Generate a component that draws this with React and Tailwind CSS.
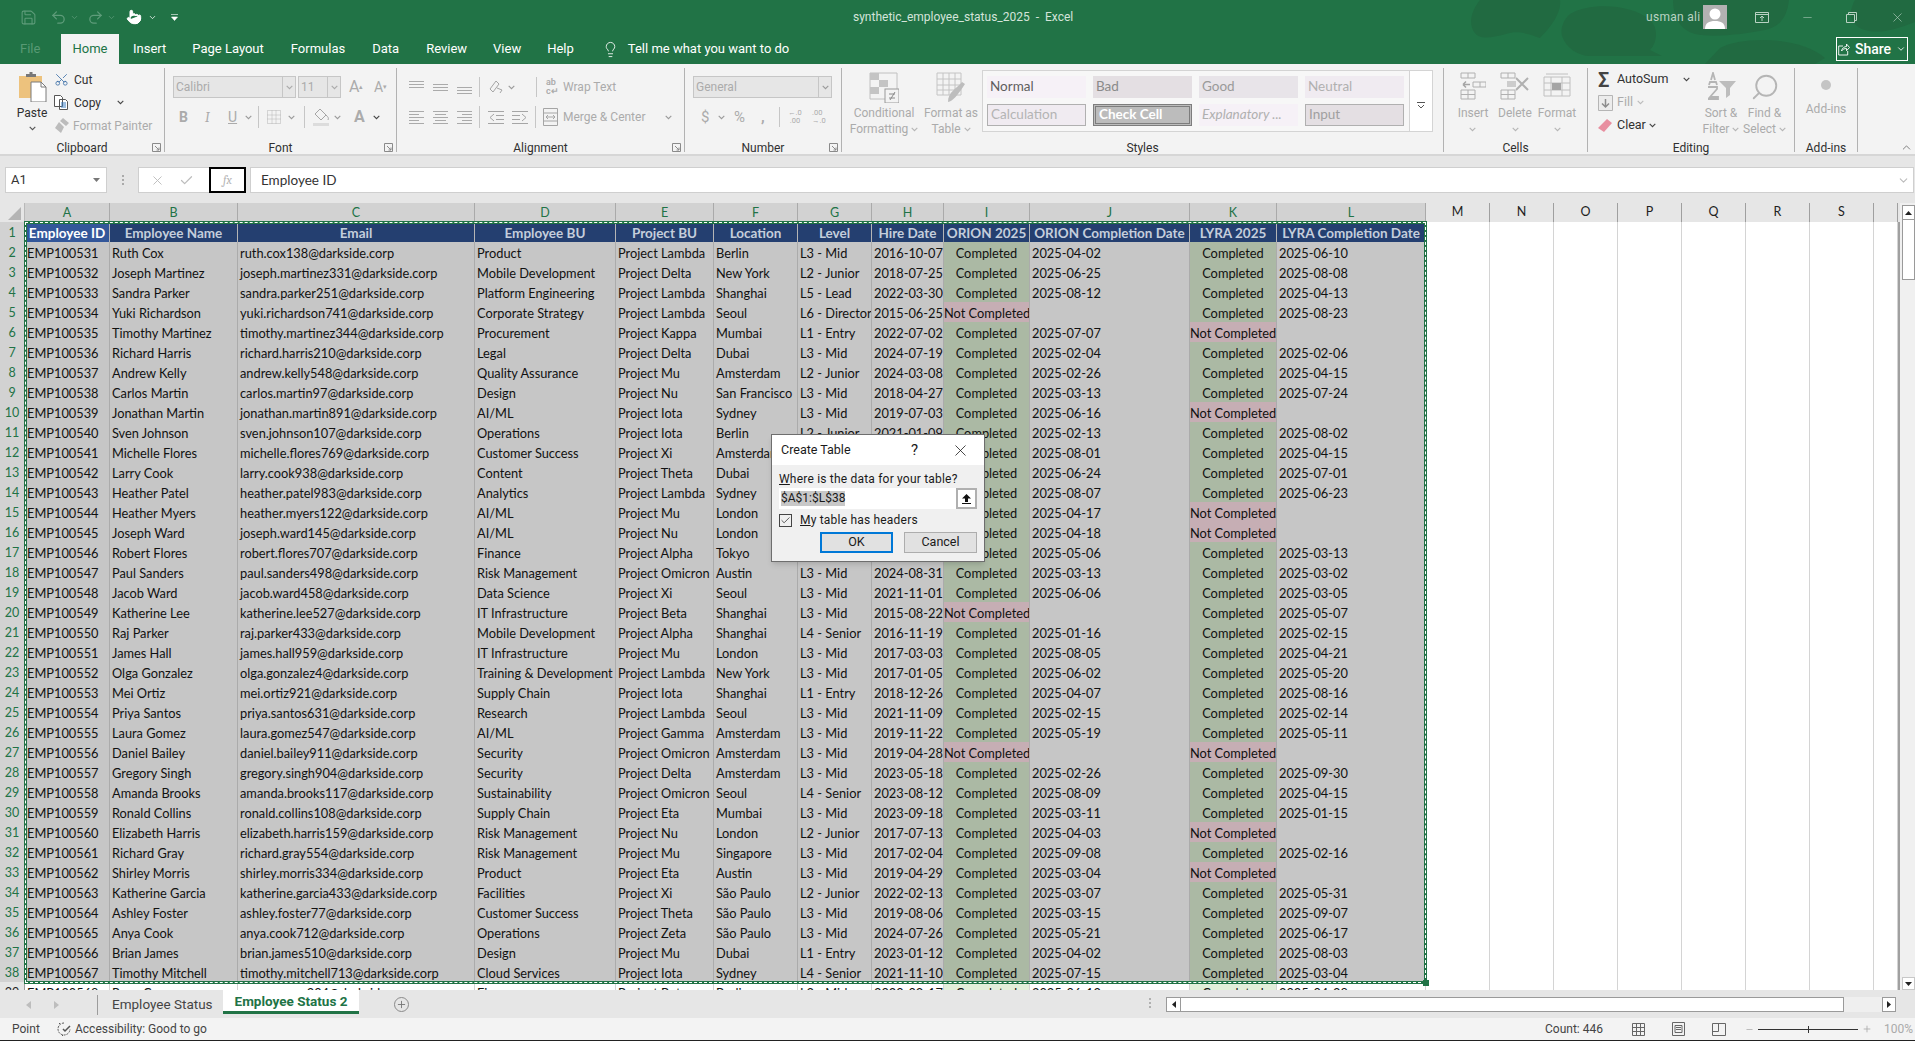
import React from 'react';
import { Save, Undo2, Redo2, Pointer, Lightbulb, ChevronDown, ChevronUp, Scissors, X, Check, Plus, Minus, Search } from 'lucide-react';

const C = 'Completed';
const N = 'Not Completed';
const raw = `100531|Ruth Cox|ruth.cox138|Product|Lambda|Berlin|L3 - Mid|2016-10-07|C|2025-04-02|C|2025-06-10
100532|Joseph Martinez|joseph.martinez331|Mobile Development|Delta|New York|L2 - Junior|2018-07-25|C|2025-06-25|C|2025-08-08
100533|Sandra Parker|sandra.parker251|Platform Engineering|Lambda|Shanghai|L5 - Lead|2022-03-30|C|2025-08-12|C|2025-04-13
100534|Yuki Richardson|yuki.richardson741|Corporate Strategy|Lambda|Seoul|L6 - Director|2015-06-25|N||C|2025-08-23
100535|Timothy Martinez|timothy.martinez344|Procurement|Kappa|Mumbai|L1 - Entry|2022-07-02|C|2025-07-07|N|
100536|Richard Harris|richard.harris210|Legal|Delta|Dubai|L3 - Mid|2024-07-19|C|2025-02-04|C|2025-02-06
100537|Andrew Kelly|andrew.kelly548|Quality Assurance|Mu|Amsterdam|L2 - Junior|2024-03-08|C|2025-02-26|C|2025-04-15
100538|Carlos Martin|carlos.martin97|Design|Nu|San Francisco|L3 - Mid|2018-04-27|C|2025-03-13|C|2025-07-24
100539|Jonathan Martin|jonathan.martin891|AI/ML|Iota|Sydney|L3 - Mid|2019-07-03|C|2025-06-16|N|
100540|Sven Johnson|sven.johnson107|Operations|Iota|Berlin|L2 - Junior|2021-01-09|C|2025-02-13|C|2025-08-02
100541|Michelle Flores|michelle.flores769|Customer Success|Xi|Amsterdam|L3 - Mid|2020-05-11|C|2025-08-01|C|2025-04-15
100542|Larry Cook|larry.cook938|Content|Theta|Dubai|L3 - Mid|2020-02-18|C|2025-06-24|C|2025-07-01
100543|Heather Patel|heather.patel983|Analytics|Lambda|Sydney|L3 - Mid|2019-10-03|C|2025-08-07|C|2025-06-23
100544|Heather Myers|heather.myers122|AI/ML|Mu|London|L3 - Mid|2021-06-14|C|2025-04-17|N|
100545|Joseph Ward|joseph.ward145|AI/ML|Nu|London|L3 - Mid|2018-09-21|C|2025-04-18|N|
100546|Robert Flores|robert.flores707|Finance|Alpha|Tokyo|L3 - Mid|2022-01-27|C|2025-05-06|C|2025-03-13
100547|Paul Sanders|paul.sanders498|Risk Management|Omicron|Austin|L3 - Mid|2024-08-31|C|2025-03-13|C|2025-03-02
100548|Jacob Ward|jacob.ward458|Data Science|Xi|Seoul|L3 - Mid|2021-11-01|C|2025-06-06|C|2025-03-05
100549|Katherine Lee|katherine.lee527|IT Infrastructure|Beta|Shanghai|L3 - Mid|2015-08-22|N||C|2025-05-07
100550|Raj Parker|raj.parker433|Mobile Development|Alpha|Shanghai|L4 - Senior|2016-11-19|C|2025-01-16|C|2025-02-15
100551|James Hall|james.hall959|IT Infrastructure|Mu|London|L3 - Mid|2017-03-03|C|2025-08-05|C|2025-04-21
100552|Olga Gonzalez|olga.gonzalez4|Training & Development|Lambda|New York|L3 - Mid|2017-01-05|C|2025-06-02|C|2025-05-20
100553|Mei Ortiz|mei.ortiz921|Supply Chain|Iota|Shanghai|L1 - Entry|2018-12-26|C|2025-04-07|C|2025-08-16
100554|Priya Santos|priya.santos631|Research|Lambda|Seoul|L3 - Mid|2021-11-09|C|2025-02-15|C|2025-02-14
100555|Laura Gomez|laura.gomez547|AI/ML|Gamma|Amsterdam|L3 - Mid|2019-11-22|C|2025-05-19|C|2025-05-11
100556|Daniel Bailey|daniel.bailey911|Security|Omicron|Amsterdam|L3 - Mid|2019-04-28|N||N|
100557|Gregory Singh|gregory.singh904|Security|Delta|Amsterdam|L3 - Mid|2023-05-18|C|2025-02-26|C|2025-09-30
100558|Amanda Brooks|amanda.brooks117|Sustainability|Omicron|Seoul|L4 - Senior|2023-08-12|C|2025-08-09|C|2025-04-15
100559|Ronald Collins|ronald.collins108|Supply Chain|Eta|Mumbai|L3 - Mid|2023-09-18|C|2025-03-11|C|2025-01-15
100560|Elizabeth Harris|elizabeth.harris159|Risk Management|Nu|London|L2 - Junior|2017-07-13|C|2025-04-03|N|
100561|Richard Gray|richard.gray554|Risk Management|Mu|Singapore|L3 - Mid|2017-02-04|C|2025-09-08|C|2025-02-16
100562|Shirley Morris|shirley.morris334|Product|Eta|Austin|L3 - Mid|2019-04-29|C|2025-03-04|N|
100563|Katherine Garcia|katherine.garcia433|Facilities|Xi|São Paulo|L2 - Junior|2022-02-13|C|2025-03-07|C|2025-05-31
100564|Ashley Foster|ashley.foster77|Customer Success|Theta|São Paulo|L3 - Mid|2019-08-06|C|2025-03-15|C|2025-09-07
100565|Anya Cook|anya.cook712|Operations|Zeta|São Paulo|L3 - Mid|2024-07-26|C|2025-05-21|C|2025-06-17
100566|Brian James|brian.james510|Design|Mu|Dubai|L1 - Entry|2023-01-12|C|2025-04-02|C|2025-08-03
100567|Timothy Mitchell|timothy.mitchell713|Cloud Services|Iota|Sydney|L4 - Senior|2021-11-10|C|2025-07-15|C|2025-03-04`;

const rows = raw.split('\n').map((l) => l.split('|'));
const headers = ['Employee ID', 'Employee Name', 'Email', 'Employee BU', 'Project BU', 'Location', 'Level', 'Hire Date', 'ORION 2025', 'ORION Completion Date', 'LYRA 2025', 'LYRA Completion Date'];
const selCols = ['A', 'B', 'C', 'D', 'E', 'F', 'G', 'H', 'I', 'J', 'K', 'L'];
const otherCols = ['M', 'N', 'O', 'P', 'Q', 'R', 'S', ''];
const gridCols = 'grid grid-cols-[25px_85px_128px_237px_141px_98px_84px_74px_72px_86px_160px_87px_149px_64px_64px_64px_64px_64px_64px_64px_24px]';

const Chev = ({ className = 'text-[#9a9a9a]' }) => (
  <svg width="7" height="5" viewBox="0 0 7 5" className={`shrink-0 ${className}`}><path d="M.7.8l2.8 2.8L6.3.8" fill="none" stroke="currentColor" strokeWidth="1.1" /></svg>
);

const Lines = ({ widths, color = '#aaa' }) => (
  <svg width="15" height="13" viewBox="0 0 15 13" className="shrink-0">
    {widths.map(([x, w, y], i) => <rect key={i} x={x} y={y} width={w} height="1" fill={color} />)}
  </svg>
);

const Launcher = () => (
  <svg width="9" height="9" viewBox="0 0 9 9" className="text-[#8a8a8a]"><path d="M.5 8.5V.5h8v8z M3 3l4 4M7 4.5V7H4.5" fill="none" stroke="currentColor" strokeWidth="1" /></svg>
);

const Group = ({ w, label, launcher, children }) => (
  <div className={`flex flex-col h-[84px] border-r border-[#b2b2b2] shrink-0 ${w}`}>
    <div className="flex-1 min-h-0">{children}</div>
    <div className="relative h-[8px] flex items-center justify-center text-[12px] leading-none text-[#303030]">
      {label}
      {launcher && <span className="absolute right-[3px] -top-[1px] flex"><Launcher /></span>}
    </div>
  </div>
);

const BigButton = ({ w, icon, lines, ml = '' }) => (
  <div className={`flex flex-col items-center shrink-0 ${w} ${ml}`}>
    <div className="h-[37px] pt-[4px] flex items-start justify-center">{icon}</div>
    <div className="text-[12px] leading-[16px] text-[#ababab] text-center whitespace-nowrap flex flex-col items-center">
      {lines.map((l, i) => (
        <span key={i} className="flex items-center gap-[3px]">{l}{i === lines.length - 1 && lines.length === 2 && <Chev className="text-[#b5b5b5]" />}</span>
      ))}
      {lines.length === 1 && <span className="h-[16px] flex items-center"><Chev className="text-[#b5b5b5]" /></span>}
    </div>
  </div>
);

const StyleCell = ({ className, children }) => (
  <div className={`h-[22px] w-[99px] flex items-center px-[3px] text-[13.5px] leading-none whitespace-nowrap shrink-0 font-[Lato,sans-serif] ${className}`}>{children}</div>
);

const Blobs = () => (
  <svg className="absolute right-0 top-0 pointer-events-none" width="480" height="64" viewBox="0 0 480 64">
    <g fill="#216a41">
      <path d="M45 0c-8 10-12 22-6 32 5 7 14 7 32 2 10-3 18-2 34 4 8-8 22-24 20-38z" />
      <path d="M135 14c20-12 62-10 80 6 8 7 8 22 0 30l12 6H155c-12 0-24-8-28-20-2-8 2-17 8-22z" />
      <path d="M238 0c0 14 6 30 22 34 18 4 50 0 70-4 14-3 22-12 24-30z" />
      <path d="M285 48c22-12 80-12 105 10l-10 6H270z" />
      <path d="M420 0c-8 14-4 26 10 30 14 4 30 0 50-8V0z" />
    </g>
  </svg>
);

const TitleBar = () => (
  <div className="relative z-10 h-[34px] flex items-center text-[#d4e4da]">
    <div className="flex items-center h-full pl-[20px] w-[853px] shrink-0">
      <Save size={17} strokeWidth={1.5} className="text-[#5e9c7a]" />
      <Undo2 size={17} strokeWidth={1.8} className="ml-[13px] text-[#5e9c7a]" />
      <ChevronDown size={9} className="ml-[3px] text-[#5e9c7a]" />
      <Redo2 size={17} strokeWidth={1.8} className="ml-[8px] text-[#5e9c7a]" />
      <ChevronDown size={9} className="ml-[3px] text-[#5e9c7a]" />
      <Pointer size={16} strokeWidth={1.5} fill="#fff" className="ml-[10px] text-white" />
      <ChevronDown size={9} className="ml-[6px] text-white" />
      <svg width="7" height="8" viewBox="0 0 7 8" className="ml-[14px] text-white"><path d="M0 1.5h7M.5 4h6L3.5 7.5z" fill="currentColor" stroke="currentColor" strokeWidth=".6" /></svg>
    </div>
    <div className="text-[12px] whitespace-nowrap">synthetic_employee_status_2025&nbsp;&nbsp;-&nbsp;&nbsp;Excel</div>
    <div className="ml-auto flex items-center h-full text-[#b9d2c3]">
      <span className="text-[12px] tracking-[0.3px] w-[57px] whitespace-nowrap">usman ali</span>
      <span className="w-[24px] h-[24px] bg-[#b1b1b1] overflow-hidden flex items-end justify-center">
        <svg width="22" height="23" viewBox="0 0 22 23"><circle cx="11" cy="8" r="5.5" fill="#fff" /><path d="M1 23c0-6 4-8 10-8s10 2 10 8z" fill="#fff" /></svg>
      </span>
      <svg width="14" height="11" viewBox="0 0 14 11" className="ml-[28px]"><path d="M.5.5h13v10H.5zM.5 2.5h13M7 9V4M5 6l2-2 2 2" fill="none" stroke="currentColor" /></svg>
      <Minus size={13} strokeWidth={1} className="ml-[32px]" />
      <svg width="11" height="11" viewBox="0 0 11 11" className="ml-[32px]"><path d="M.5 2.5h8v8h-8zM2.5 2.5v-2h8v8h-2" fill="none" stroke="currentColor" /></svg>
      <X size={15} strokeWidth={1} className="ml-[33px] mr-[10px]" />
    </div>
  </div>
);

const TabRow = () => {
  const tabs = [['Insert', 'ml-[14px]'], ['Page Layout', 'ml-[26px]'], ['Formulas', 'ml-[27px]'], ['Data', 'ml-[27px]'], ['Review', 'ml-[27px]'], ['View', 'ml-[26px]'], ['Help', 'ml-[26px]']];
  return (
    <div className="relative z-10 h-[30px] flex items-stretch text-[13px] text-white">
      <span className="ml-[20px] w-[41px] flex items-center text-[#589a74]">File</span>
      <span className="w-[58px] bg-[#f3f3f3] text-[#217346] flex items-center justify-center">Home</span>
      {tabs.map(([t, m]) => <span key={t} className={`flex items-center whitespace-nowrap ${m}`}>{t}</span>)}
      <span className="flex items-center ml-[28px]"><Lightbulb size={17} strokeWidth={1.2} /></span>
      <span className="flex items-center ml-[9px] whitespace-nowrap">Tell me what you want to do</span>
      <span className="ml-auto mr-[7px] mt-[3px] mb-[3px] w-[72px] border-[1.5px] border-white flex items-center justify-center gap-[5px] text-[14px] font-medium">
        <svg width="12" height="13" viewBox="0 0 12 13"><path d="M5 3H.7v9h9V8M3.5 8c.5-3 3-4.5 5-4.5V1l3 3.5-3 3.2V5.5C6.5 5.5 5 6 3.5 8z" fill="none" stroke="#fff" strokeWidth=".9" /></svg>
        Share
        <ChevronDown size={10} />
      </span>
    </div>
  );
};

const Ribbon = () => (
  <div className="h-[92px] bg-[#f3f3f3] border-b-2 border-[#d6d6d6] pt-[4px] flex text-[#ababab]">
    <Group w="w-[165px]" label="Clipboard" launcher>
      <div className="flex">
        <div className="w-[50px] pl-[14px] flex flex-col items-center shrink-0">
          <svg width="30" height="30" viewBox="0 0 30 30" className="mt-[4px]">
            <path d="M2 4h23v22H2z" fill="#edc27d" /><path d="M9 5V2h3.5V0h3v2H19v3z" fill="#787878" />
            <path d="M14 10h10l5 5v15H14z" fill="#fff" stroke="#7a7a7a" /><path d="M24 10v5h5" fill="none" stroke="#7a7a7a" />
          </svg>
          <span className="text-[12px] leading-none mt-[5px] text-[#303030]">Paste</span>
          <span className="mt-[7px]"><Chev className="text-[#555]" /></span>
        </div>
        <div className="ml-[4px] flex flex-col">
          <div className="h-[23px] flex items-center gap-[5px] text-[12px] text-[#303030]"><Scissors size={15} strokeWidth={1.3} className="text-[#3a6ea8] -rotate-90" />Cut</div>
          <div className="h-[23px] flex items-center gap-[5px] text-[12px] text-[#303030]">
            <svg width="15" height="15" viewBox="0 0 15 15" fill="none" stroke="#555"><path d="M.5.5h6l2 2v9h-8zM5.5 4.5h6l2 2v8h-8z" fill="#fff" /><path d="M7 8h5M7 10h5M7 12h5" stroke="#3a7fc4" /></svg>
            Copy<span className="ml-[11px]"><Chev className="text-[#444]" /></span>
          </div>
          <div className="h-[23px] flex items-center gap-[4px] text-[12px] whitespace-nowrap">
            <svg width="15" height="15" viewBox="0 0 15 15" fill="#bcbcbc"><path d="M9 0l6 5-3 3-6-5zM5 4l5 5-3 6-6-5z" /></svg>
            Format Painter
          </div>
        </div>
      </div>
    </Group>

    <Group w="w-[232px]" label="Font" launcher>
      <div className="pt-[8px] pl-[8px]">
        <div className="flex items-center h-[22px]">
          <div className="w-[123px] h-[22px] bg-[#e6e6e6] border border-[#c6c6c6] flex items-center justify-between text-[12px] pl-[2px]">Calibri<span className="w-[13px] h-full border-l border-[#c6c6c6] flex items-center justify-center"><Chev className="text-[#aaa]" /></span></div>
          <div className="ml-[2px] w-[43px] h-[22px] bg-[#e6e6e6] border border-[#c6c6c6] flex items-center justify-between text-[12px] pl-[2px]">11<span className="w-[13px] h-full border-l border-[#c6c6c6] flex items-center justify-center"><Chev className="text-[#aaa]" /></span></div>
          <span className="ml-[8px] w-[25px] text-[16px] leading-none">A<sup className="text-[7px]">▴</sup></span>
          <span className="text-[14px] leading-none">A<sup className="text-[7px]">▾</sup></span>
        </div>
        <div className="flex items-center h-[22px] mt-[8px] text-[14px]">
          <span className="ml-[6px] w-[26px] font-bold">B</span>
          <span className="w-[23px] italic font-serif">I</span>
          <span className="w-[14px] underline">U</span>
          <span className="ml-[3px]"><Chev /></span>
          <span className="ml-[6px] w-px h-[22px] bg-[#c6c6c6]" />
          <svg width="14" height="14" viewBox="0 0 14 14" className="ml-[8px]"><path d="M.5.5h13v13H.5zM5 .5v13M9 .5v13M.5 5h13M.5 9h13" fill="none" stroke="#b5b5b5" strokeDasharray="1 1" /></svg>
          <span className="ml-[7px]"><Chev /></span>
          <span className="ml-[9px] w-px h-[22px] bg-[#c6c6c6]" />
          <svg width="17" height="18" viewBox="0 0 17 18" className="ml-[8px]"><path d="M7 1l6 6-5 5-6-6zM13 7c2 2 3 3 2 5" fill="none" stroke="#a5a5a5" /><rect y="15" width="16" height="3" fill="#dcdcdc" /></svg>
          <span className="ml-[4px]"><Chev /></span>
          <span className="ml-[13px] font-bold text-[16px] leading-none">A</span>
          <span className="ml-[8px]"><Chev className="text-[#444]" /></span>
        </div>
      </div>
    </Group>

    <Group w="w-[288px]" label="Alignment" launcher>
      <div className="pt-[8px] pl-[12px]">
        <div className="flex items-center h-[22px]">
          <Lines widths={[[0, 15, 0], [0, 15, 3], [0, 15, 6]]} />
          <span className="ml-[9px]"><Lines widths={[[0, 15, 3], [0, 15, 6], [0, 15, 9]]} /></span>
          <span className="ml-[9px]"><Lines widths={[[0, 15, 6], [0, 15, 9], [0, 15, 12]]} /></span>
          <span className="ml-[7px] w-px h-[20px] bg-[#c6c6c6]" />
          <svg width="16" height="16" viewBox="0 0 16 16" className="ml-[8px]"><path d="M2 10l6-8 3 3-6 8zM9 9l5 2-2 3" fill="none" stroke="#a5a5a5" /></svg>
          <span className="ml-[4px]"><Chev /></span>
          <span className="ml-[21px] w-px h-[20px] bg-[#c6c6c6]" />
          <span className="ml-[9px] w-[17px] text-[9px] leading-[9px] font-semibold">ab<br />c↵</span>
          <span className="text-[12px] whitespace-nowrap">Wrap Text</span>
        </div>
        <div className="flex items-center h-[22px] mt-[8px]">
          <Lines widths={[[0, 15, 0], [0, 10, 3], [0, 15, 6], [0, 10, 9], [0, 15, 12]]} />
          <span className="ml-[9px]"><Lines widths={[[0, 15, 0], [2, 11, 3], [0, 15, 6], [2, 11, 9], [0, 15, 12]]} /></span>
          <span className="ml-[9px]"><Lines widths={[[0, 15, 0], [5, 10, 3], [0, 15, 6], [5, 10, 9], [0, 15, 12]]} /></span>
          <span className="ml-[7px] w-px h-[22px] bg-[#c6c6c6]" />
          <svg width="16" height="13" viewBox="0 0 16 13" className="ml-[8px]"><path d="M0 .5h16M8 4.5h8M8 8.5h8M0 12.5h16M6 3L2 6.5 6 10" fill="none" stroke="#a5a5a5" /></svg>
          <svg width="16" height="13" viewBox="0 0 16 13" className="ml-[8px]"><path d="M0 .5h16M0 4.5h8M0 8.5h8M0 12.5h16M10 3l4 3.5-4 3.5" fill="none" stroke="#a5a5a5" /></svg>
          <span className="ml-[7px] w-px h-[22px] bg-[#c6c6c6]" />
          <svg width="15" height="18" viewBox="0 0 15 18" className="ml-[7px]"><path d="M.5.5h14v17H.5zM.5 5h14M.5 13h14M3 9h9M3 9l2-2M3 9l2 2M12 9l-2-2M12 9l-2 2" fill="none" stroke="#a5a5a5" /></svg>
          <span className="ml-[5px] text-[12px] whitespace-nowrap w-[102px]">Merge &amp; Center</span>
          <Chev />
        </div>
      </div>
    </Group>

    <Group w="w-[157px]" label="Number" launcher>
      <div className="pt-[8px] pl-[8px]">
        <div className="w-[139px] h-[22px] bg-[#e6e6e6] border border-[#c6c6c6] flex items-center justify-between text-[12px] pl-[2px]">General<span className="w-[13px] h-full border-l border-[#c6c6c6] flex items-center justify-center"><Chev /></span></div>
        <div className="flex items-center h-[22px] mt-[8px] text-[15px]">
          <span className="ml-[8px] w-[17px]">$</span>
          <Chev />
          <span className="ml-[9px] w-[27px]">%</span>
          <span className="w-[18px] font-bold leading-none">,</span>
          <span className="w-px h-[20px] bg-[#c6c6c6]" />
          <span className="ml-[8px] w-[24px] text-[7.5px] leading-[8px]">←.0<br />&nbsp;.00</span>
          <span className="text-[7.5px] leading-[8px]">.00<br />→.0</span>
        </div>
      </div>
    </Group>

    <Group w="w-[602px]" label="Styles">
      <div className="flex">
        <BigButton w="w-[66px]" ml="ml-[9px]" lines={['Conditional', 'Formatting']} icon={
          <svg width="30" height="31" viewBox="0 0 30 31"><path d="M1 1h27v26H1z" fill="none" stroke="#c0c0c0" /><path d="M1 1h9v7H1zM10 8h9v7h-9zM1 15h9v7H1z" fill="#c4c4c4" /><rect x="16" y="17" width="14" height="14" fill="#f3f3f3" stroke="#9a9a9a" /><path d="M20 22h6M20 26h6M26 20l-5 8" stroke="#8a8a8a" fill="none" /></svg>
        } />
        <BigButton w="w-[54px]" ml="ml-[7px]" lines={['Format as', 'Table']} icon={
          <svg width="30" height="31" viewBox="0 0 30 31"><path d="M1 1h24v22H1zM1 7h24M1 13h24M1 18h24M7 1v22M13 1v22M19 1v22" fill="none" stroke="#c4c4c4" /><path d="M12 30c5-1 9-6 17-18l-3-2C20 17 12 20 12 30z" fill="#bdbdbd" /></svg>
        } />
        <div className="ml-[4px] mt-[2px] w-[451px] h-[62px] bg-white border border-[#d4d4d4] flex shrink-0">
          <div className="w-[426px] pl-[4px] pt-[5px] flex flex-col gap-[6px] bg-[#f7f7f7]">
            <div className="flex gap-[7px]">
              <StyleCell className="bg-[#f6f1f7] text-[#5e5e5e]">Normal</StyleCell>
              <StyleCell className="bg-[#e4dfe3] text-[#8a8a8a]">Bad</StyleCell>
              <StyleCell className="bg-[#e8e4e9] text-[#9a9a9a]">Good</StyleCell>
              <StyleCell className="bg-[#f0ebf1] text-[#b0b0b0]">Neutral</StyleCell>
            </div>
            <div className="flex gap-[7px]">
              <StyleCell className="bg-[#f0ebf1] border border-[#b0b0b0] text-[#b4b4b4]">Calculation</StyleCell>
              <StyleCell className="bg-[#bcbcbc] border-[3px] border-double border-[#7d7d7d] text-white font-bold">Check Cell</StyleCell>
              <StyleCell className="bg-[#f6f1f7] italic text-[#b0b0b0]">Explanatory ...</StyleCell>
              <StyleCell className="bg-[#e4dfe3] border border-[#b0b0b0] text-[#a0a0a0]">Input</StyleCell>
            </div>
          </div>
          <div className="flex-1 border-l border-[#d4d4d4] flex items-center justify-center">
            <svg width="8" height="7" viewBox="0 0 8 7" className="mt-[8px]"><path d="M0 .5h8M1 3l3 3 3-3" fill="none" stroke="#555" /></svg>
          </div>
        </div>
      </div>
    </Group>

    <Group w="w-[144px]" label="Cells">
      <div className="flex pl-[8px] pr-[5px]">
        <BigButton w="w-[42px]" lines={['Insert']} icon={<svg width="26" height="28" viewBox="0 0 26 28"><path d="M1 1h14v5H1zM1 18h14v9H1zM1 22.500h14M8 1v5M8 18v9M13 10h13v5H13zM20 10v5" fill="none" stroke="#b0b0b0" /><path d="M3 12.500h7M3 12.500l3-3M3 12.500l3 3" stroke="#a5a5a5" fill="none" strokeWidth="1.5" /></svg>} />
        <BigButton w="w-[42px]" lines={['Delete']} icon={<svg width="30" height="28" viewBox="0 0 30 28"><path d="M1 1h14v5H1zM1 18h14v9H1zM1 22.500h14M8 1v5M8 18v9" fill="none" stroke="#b0b0b0" /><rect x="7" y="9" width="9" height="6" fill="#ccc" /><path d="M16 6l12 12M28 6L16 18" stroke="#b0b0b0" strokeWidth="2" /></svg>} />
        <BigButton w="w-[42px]" lines={['Format']} icon={<svg width="28" height="29" viewBox="0 0 28 29"><path d="M1 5h26v19H1zM1 11h26M1 18h26M8 5v19M19 5v19M3 2h22" fill="none" stroke="#c0c0c0" /><rect x="9" y="11" width="9" height="7" fill="#a5a5a5" /></svg>} />
      </div>
    </Group>

    <Group w="w-[207px]" label="Editing">
      <div className="flex pl-[10px]">
        <div className="w-[103px] flex flex-col shrink-0">
          <div className="h-[23px] flex items-center text-[12.5px] text-[#303030]">
            <span className="w-[19px] text-[20px] leading-none font-semibold text-[#444]">Σ</span>AutoSum<span className="ml-[15px]"><Chev className="text-[#444]" /></span>
          </div>
          <div className="h-[23px] flex items-center text-[12.5px]">
            <svg width="15" height="16" viewBox="0 0 15 16" className="mr-[4px]"><path d="M.5.5h14v15H.5z" fill="#ececec" stroke="#b5b5b5" /><path d="M7.500 4v8M4 8.500l3.500 3.500L11 8.500" stroke="#8c8c8c" strokeWidth="1.500" fill="none" /></svg>
            Fill<span className="ml-[4px]"><Chev className="text-[#bbb]" /></span>
          </div>
          <div className="h-[23px] flex items-center text-[12.5px] text-[#303030]">
            <svg width="14" height="13" viewBox="0 0 14 13" className="mr-[5px]"><path d="M9 0l5 4-8 9-6-4z" fill="#e88fa0" /></svg>
            Clear<span className="ml-[3px]"><Chev className="text-[#444]" /></span>
          </div>
        </div>
        <BigButton w="w-[40px]" lines={['Sort &', 'Filter']} icon={
          <svg width="30" height="28" viewBox="0 0 30 28"><path d="M11 13l-1-3H4l-1 3M5 8l2-7 2 7M2 15h9v2l-7 8h8v2H2" fill="none" stroke="#b5b5b5" strokeWidth="1.800" /><path d="M13 9h17l-6 7v7l-4 3V16z" fill="#bdbdbd" /></svg>
        } />
        <BigButton w="w-[41px]" ml="ml-[3px]" lines={['Find &', 'Select']} icon={<Search size={30} strokeWidth={1.5} className="-scale-x-100 text-[#b5b5b5]" />} />
      </div>
    </Group>

    <Group w="w-[63px]" label="Add-ins">
      <div className="flex flex-col items-center pt-[12px]">
        <span className="w-[10px] h-[10px] rounded-full bg-[#c4c4c4]" />
        <span className="text-[12px] mt-[11px] leading-[16px]">Add-ins</span>
      </div>
    </Group>

    <div className="flex-1 flex items-end justify-end pr-[2px]">
      <ChevronUp size={13} strokeWidth={1.2} className="text-[#444]" />
    </div>
  </div>
);

const FormulaBar = () => (
  <div className="h-[47px] bg-[#e6e6e6] pt-[11px] pl-[5px] pr-px flex items-start">
    <div className="w-[102px] h-[26px] bg-white border border-[#cfcfcf] flex items-center justify-between pl-[5px] pr-[6px] text-[13px] text-[#333]">A1<svg width="7" height="4" viewBox="0 0 7 4"><path d="M0 0h7L3.500 4z" fill="#777" /></svg></div>
    <div className="w-[31px] h-[26px] flex flex-col items-center justify-center gap-[2px]">
      <i className="w-[2px] h-[2px] bg-[#aaa]" /><i className="w-[2px] h-[2px] bg-[#aaa]" /><i className="w-[2px] h-[2px] bg-[#aaa]" />
    </div>
    <div className="w-[71px] h-[26px] bg-white border-y border-l border-[#cfcfcf] flex items-center justify-around pl-[4px] pr-[8px] text-[#bdbdbd]">
      <X size={15} strokeWidth={1.5} /><Check size={15} strokeWidth={2} />
    </div>
    <div className="w-[37px] h-[26px] bg-white border-2 border-black flex items-center justify-center font-serif italic text-[12px] text-[#b5b5b5]">fx</div>
    <div className="ml-[4px] flex-1 h-[26px] bg-white border border-[#cfcfcf] flex items-center justify-between pl-[10px] pr-[3px] text-[13.5px] text-[#333] font-[Lato,sans-serif]">
      Employee ID
      <ChevronDown size={13} className="text-[#bbb]" />
    </div>
  </div>
);

const cellFont = 'font-[Lato,sans-serif] text-[12.800px] leading-[23px]';
const headFont = 'font-[Lato,sans-serif] text-[13.500px] leading-[22px] font-bold';

const statusClass = (v) => (v === 'N' ? 'bg-[#c6aeb4]' : 'bg-[#abb9a4]');

const Row = ({ r, n }) => (
  <div className={`${gridCols} h-[20px]`}>
    <div className="bg-[#d2d2d2] border-b border-[#ababab] border-r border-r-[#9c9c9c] flex items-center justify-center pt-[2px] text-[#217346] text-[12.500px] font-[Lato,sans-serif]">{n}</div>
    {r.map((v, i) => {
      const isStatus = i === 8 || i === 10;
      const text = i === 0 ? `EMP${v}` : i === 2 ? `${v}@darkside.corp` : i === 4 ? `Project ${v}` : isStatus ? (v === 'N' ? N : C) : v;
      return (
        <div key={i} className={`border-r border-b border-[#ababab] overflow-hidden whitespace-nowrap text-[#111] ${cellFont} ${isStatus ? `text-center ${statusClass(v)}` : 'pl-[2px] bg-[#c6c6c6]'}`}>{text}</div>
      );
    })}
    {otherCols.map((c, i) => <div key={i} className="bg-white border-r border-b border-[#d4d4d4]" />)}
  </div>
);

const Sheet = () => (
  <div className="relative flex h-[787px] bg-[#e6e6e6]">
    <div className="w-[1898px] shrink-0 overflow-hidden">
      <div className={`${gridCols} h-[19px] text-[12.500px] font-[Lato,sans-serif]`}>
        <div className="bg-[#e6e6e6] border-r border-[#b9b9b9] flex items-end justify-end pr-[3px] pb-[3px]">
          <svg width="13" height="13" viewBox="0 0 13 13"><path d="M13 0v13H0z" fill="#b4b4b4" /></svg>
        </div>
        {selCols.map((c) => <div key={c} className="bg-[#d2d2d2] border-r border-[#aaaaaa] flex items-center justify-center text-[#217346]">{c}</div>)}
        {otherCols.map((c, i) => <div key={i} className="border-r border-b border-[#9f9f9f] flex items-center justify-center text-[#222]">{c}</div>)}
      </div>
      <div className={`${gridCols} h-[20px]`}>
        <div className="bg-[#d2d2d2] border-b border-[#ababab] border-r border-r-[#9c9c9c] flex items-center justify-center pt-[2px] text-[#217346] text-[12.500px] font-[Lato,sans-serif]">1</div>
        {headers.map((h, i) => (
          <div key={h} className={`overflow-hidden whitespace-nowrap text-center border-r border-b border-[#b5b5b5] ${headFont} ${i === 0 ? 'bg-[#33579a] text-white' : 'bg-[#243f70] text-[#c4cedc]'}`}>{h}</div>
        ))}
        {otherCols.map((c, i) => <div key={i} className="bg-white border-r border-b border-[#d4d4d4]" />)}
      </div>
      {rows.map((r, i) => <Row key={r[0]} r={r} n={i + 2} />)}
      <div className={`${gridCols} h-[8px] overflow-hidden`}>
        <div className="bg-[#e6e6e6] border-r border-[#9c9c9c] text-center text-[12.500px] leading-[22px] text-[#222] font-[Lato,sans-serif]">39</div>
        {['EMP100568', 'Ryan Cooper', 'ryan.cooper204@darkside.corp', 'Finance', 'Project Beta', 'Berlin', 'L3 - Mid', '2020-03-17'].map((t) => (
          <div key={t} className={`pl-[2px] bg-white border-r border-[#d4d4d4] overflow-hidden whitespace-nowrap text-[#111] ${cellFont}`}>{t}</div>
        ))}
        <div className={`text-center bg-[#e2efda] border-r border-[#d4d4d4] text-[#111] ${cellFont}`}>Completed</div>
        <div className={`pl-[2px] bg-white border-r border-[#d4d4d4] text-[#111] ${cellFont}`}>2025-06-12</div>
        <div className={`text-center bg-[#e2efda] border-r border-[#d4d4d4] text-[#111] ${cellFont}`}>Completed</div>
        <div className={`pl-[2px] bg-white border-r border-[#d4d4d4] text-[#111] ${cellFont}`}>2025-04-28</div>
        {otherCols.map((c, i) => <div key={i} className="bg-white border-r border-[#d4d4d4]" />)}
      </div>
    </div>
    <div className="w-[2px] bg-[#a0a0a0] mt-[19px] shrink-0" />
    <div className="w-[15px] flex flex-col pl-[2px] pt-[2px] shrink-0 bg-[#f0f0f0]">
      <div className="h-[15px] bg-white border border-[#9a9a9a] flex items-center justify-center"><svg width="7" height="4" viewBox="0 0 7 4"><path d="M3.500 0L7 4H0z" fill="#222" /></svg></div>
      <div className="h-[60px] bg-white border-x border-b border-[#9a9a9a]" />
      <div className="flex-1" />
      <div className="h-[13px] bg-white border border-[#c8c8c8] flex items-center justify-center"><svg width="7" height="4" viewBox="0 0 7 4"><path d="M0 0h7L3.500 4z" fill="#222" /></svg></div>
    </div>

    {/* marching ants round the picked range */}
    <div className="absolute left-[24px] top-[18px] w-[1403px] h-[763px] border-[3px] border-[#217346] pointer-events-none">
      <div className="absolute -inset-[2px] border border-dashed border-white" />
      <div className="absolute -right-[5px] -bottom-[5px] w-[6px] h-[6px] bg-[#217346]" />
    </div>

    <CreateTable />
  </div>
);

const CreateTable = () => (
  <div className="absolute left-[771px] top-[231px] w-[214px] h-[128px] bg-[#f0f0f0] border border-[#6e6e6e] shadow-md flex flex-col text-[12px] text-[#1a1a1a]">
    <div className="h-[30px] bg-white flex items-center pl-[9px] text-[12.5px]">
      <span className="w-[130px]">Create Table</span>
      <span className="text-[15px] w-[40px]">?</span>
      <X size={19} strokeWidth={1} />
    </div>
    <div className="pl-[7px] pr-[7px] pt-[6px]">
      <div className="leading-[16px] whitespace-nowrap tracking-[0.2px]"><u>W</u>here is the data for your table?</div>
      <div className="flex h-[21px] mt-[1px]">
        <div className="flex-1 bg-white flex items-center pl-[2px]"><span className="bg-[#c8c8c8] leading-[15px]">$A$1:$L$38</span></div>
        <div className="w-[21px] border-[2px] border-[#b0b0b0] bg-white flex items-center justify-center">
          <svg width="9" height="10" viewBox="0 0 9 10"><path d="M4.500 0L9 4.500H6V8H3V4.500H0zM0 9h9v1H0z" fill="#111" /></svg>
        </div>
      </div>
      <div className="flex items-center h-[16px] mt-[3px]">
        <span className="w-[13px] h-[13px] bg-[#f0f0f0] border border-[#444] flex items-center justify-center"><Check size={11} strokeWidth={1.5} /></span>
        <span className="ml-[8px] leading-none whitespace-nowrap tracking-[0.2px]"><u>M</u>y table has headers</span>
      </div>
      <div className="flex justify-end gap-[11px] mt-[4px] text-[12.5px]">
        <div className="w-[73px] h-[21px] bg-[#e1e1e1] border-2 border-[#0078d7] flex items-center justify-center">OK</div>
        <div className="w-[73px] h-[21px] bg-[#e1e1e1] border border-[#adadad] flex items-center justify-center">Cancel</div>
      </div>
    </div>
  </div>
);

const SheetTabs = () => (
  <div className="h-[28px] bg-[#e6e6e6] flex items-start text-[13.5px]">
    <span className="ml-[26px] mt-[11px] w-[28px]"><svg width="5" height="8" viewBox="0 0 5 8"><path d="M5 0v8L0 4z" fill="#bdbdbd" /></svg></span>
    <span className="mt-[11px]"><svg width="5" height="8" viewBox="0 0 5 8"><path d="M0 0v8l5-4z" fill="#bdbdbd" /></svg></span>
    <span className="ml-[38px] mt-[5px] w-px h-[20px] bg-[#9c9c9c]" />
    <span className="ml-[14px] mt-[5px] leading-[18px] w-[111px] whitespace-nowrap text-[#444]">Employee Status</span>
    <span className="h-[24px] w-[136px] pt-[1px] bg-white border-b-[3px] border-[#217346] flex items-center justify-center font-bold text-[#217346] whitespace-nowrap">Employee Status 2</span>
    <span className="ml-[35px] mt-[7px] w-[15px] h-[15px] rounded-full border border-[#8a8a8a] flex items-center justify-center"><Plus size={11} className="text-[#777]" /></span>
    <span className="ml-[740px] mt-[8px] flex flex-col gap-[2px]"><i className="w-[2px] h-[2px] bg-[#b0b0b0]" /><i className="w-[2px] h-[2px] bg-[#b0b0b0]" /><i className="w-[2px] h-[2px] bg-[#b0b0b0]" /></span>
    <div className="ml-[15px] mt-[7px] w-[730px] h-[15px] flex">
      <div className="w-[15px] bg-white border border-[#9a9a9a] flex items-center justify-center"><svg width="4" height="7" viewBox="0 0 4 7"><path d="M4 0v7L0 3.500z" fill="#222" /></svg></div>
      <div className="w-[663px] bg-white border-y border-r border-[#9a9a9a]" />
      <div className="flex-1 bg-[#efefef]" />
      <div className="w-[14px] bg-white border border-[#9a9a9a] flex items-center justify-center"><svg width="4" height="7" viewBox="0 0 4 7"><path d="M0 0v7l4-3.500z" fill="#222" /></svg></div>
    </div>
  </div>
);

const StatusBar = () => (
  <div className="h-[23px] bg-[#f3f3f3] border-b border-[#222] flex items-center text-[12px] text-[#444]">
    <span className="ml-[12px] w-[45px]">Point</span>
    <svg width="16" height="15" viewBox="0 0 16 15" className="text-[#555]"><path d="M7 1a6 6 0 1 0 6 6M3 2l-1-1M6 13l-1 1" fill="none" stroke="currentColor" strokeDasharray="2 1" /><path d="M6 7l2 2 5-5" fill="none" stroke="currentColor" strokeWidth="1.500" /></svg>
    <span className="ml-[2px]">Accessibility: Good to go</span>
    <span className="ml-auto w-[87px]">Count: 446</span>
    <svg width="13" height="13" viewBox="0 0 13 13"><path d="M.5.5h12v12H.5zM4.500.5v12M8.500.5v12M.5 4.500h12M.5 8.500h12" fill="none" stroke="#666" /></svg>
    <svg width="13" height="14" viewBox="0 0 13 14" className="ml-[27px]"><path d="M.5.5h12v13H.5zM3 3.500h7v7H3zM4 5.500h5M4 7.500h5" fill="none" stroke="#666" /></svg>
    <svg width="14" height="13" viewBox="0 0 14 13" className="ml-[27px]"><path d="M.5.500h13v12H.5zM.5 8.500h6V.5" fill="none" stroke="#666" /></svg>
    <Minus size={9} className="ml-[19px] text-[#aaa]" />
    <span className="ml-[4px] w-[100px] h-px bg-[#333] flex justify-center items-center"><i className="w-px h-[7px] bg-[#333]" /></span>
    <Plus size={10} className="ml-[4px] text-[#aaa]" />
    <span className="ml-[12px] mr-[3px] text-[#aaa] w-[28px]">100%</span>
  </div>
);

export default function App() {
  return (
    <div className="relative w-[1915px] h-[1041px] overflow-hidden bg-[#e6e6e6] font-[Roboto,sans-serif]">
      <div className="relative h-[64px] bg-[#217346] overflow-hidden">
        <Blobs />
        <TitleBar />
        <TabRow />
      </div>
      <Ribbon />
      <FormulaBar />
      <Sheet />
      <SheetTabs />
      <StatusBar />
    </div>
  );
}
